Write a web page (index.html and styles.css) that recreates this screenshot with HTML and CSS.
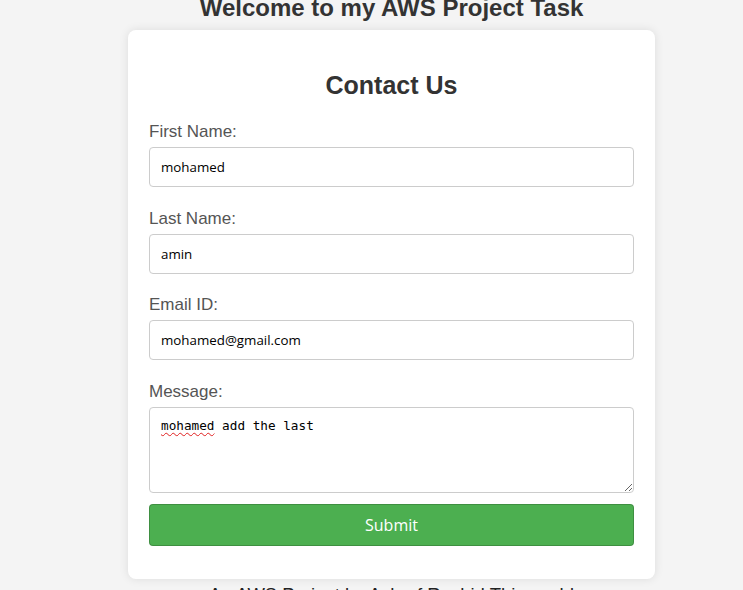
FILE: index.html
```html
<!DOCTYPE html>
<html lang="en">
<head>
<meta charset="utf-8">
<title>Contact Us</title>
<link rel="stylesheet" href="styles.css">
</head>
<body>
  <h1 class="page-title">Welcome to my AWS Project Task</h1>
  <div class="card">
    <h2 class="card-title">Contact Us</h2>
    <form class="form">
      <div class="field">
        <label class="label" for="fn">First Name:</label>
        <input class="input" id="fn" type="text" value="mohamed">
      </div>
      <div class="field">
        <label class="label" for="ln">Last Name:</label>
        <input class="input" id="ln" type="text" value="amin">
      </div>
      <div class="field">
        <label class="label" for="em">Email ID:</label>
        <input class="input" id="em" type="email" value="mohamed@gmail.com">
      </div>
      <div class="field">
        <label class="label" for="msg">Message:</label>
        <div class="area-wrap">
          <textarea class="textarea" id="msg" spellcheck="false">mohamed add the last</textarea>
          <span class="squiggle" aria-hidden="true">mohamed</span>
        </div>
      </div>
      <button class="submit" type="button">Submit</button>
    </form>
  </div>
  <p class="footer">An AWS Project by Ashraf Rashid This world</p>
</body>
</html>
```

FILE: styles.css
```css
html, body {
  margin: 0;
  padding: 0;
}
body {
  background: #f4f4f4;
  font-family: "Liberation Sans", Arial, sans-serif;
  color: #333;
  padding-left: 40px;
  display: flex;
  flex-direction: column;
  align-items: center;
  height: 590px;
  overflow: hidden;
}
body > * {
  flex-shrink: 0;
}
.page-title {
  font-size: 24px;
  line-height: 28px;
  font-weight: bold;
  margin: -6px 0 0 0;
  color: #333;
  white-space: nowrap;
}
.card {
  margin-top: 8px;
  width: 527px;
  box-sizing: border-box;
  background: #fff;
  border-radius: 8px;
  box-shadow: 0 0 10px rgba(0, 0, 0, 0.1);
  padding: 18px 21px 33px;
}
.card-title {
  font-size: 25px;
  line-height: 29px;
  font-weight: bold;
  text-align: center;
  margin: 23px 0 22px;
  color: #333;
}
.form {
  display: flex;
  flex-direction: column;
}
.field {
  display: flex;
  flex-direction: column;
  margin-bottom: 21.5px;
}
.field:nth-child(4) {
  margin-bottom: 11px;
}
.label {
  font-size: 17px;
  line-height: 20px;
  color: #555;
  margin-bottom: 5px;
}
.input {
  height: 40px;
  box-sizing: border-box;
  border: 1px solid #ccc;
  border-radius: 4px;
  padding: 0 11px;
  font-family: "Open Sans", sans-serif;
  font-size: 13.33px;
  color: #000;
  background: #fff;
  outline: none;
}
.area-wrap {
  position: relative;
  display: flex;
}
.textarea {
  width: 100%;
  height: 86px;
  box-sizing: border-box;
  border: 1px solid #ccc;
  border-radius: 4px;
  padding: 10px 11px;
  font-family: "DejaVu Sans Mono", monospace;
  font-size: 12.7px;
  line-height: 16px;
  color: #000;
  resize: vertical;
  outline: none;
}
.squiggle {
  position: absolute;
  left: 12px;
  top: 11px;
  font-family: "DejaVu Sans Mono", monospace;
  font-size: 12.7px;
  line-height: 16px;
  color: transparent;
  text-decoration: underline wavy #e02020;
  text-decoration-thickness: 1px;
  text-underline-offset: 2px;
  pointer-events: none;
}
.submit {
  height: 42px;
  background: #4caf50;
  color: #fff;
  border: 1px solid rgba(0, 0, 0, 0.18);
  border-radius: 4px;
  font-family: "Open Sans", sans-serif;
  font-size: 16px;
  cursor: pointer;
}
.footer {
  margin: 5px 0 0;
  font-size: 18.5px;
  line-height: 22px;
  color: #222;
  white-space: nowrap;
}
```
